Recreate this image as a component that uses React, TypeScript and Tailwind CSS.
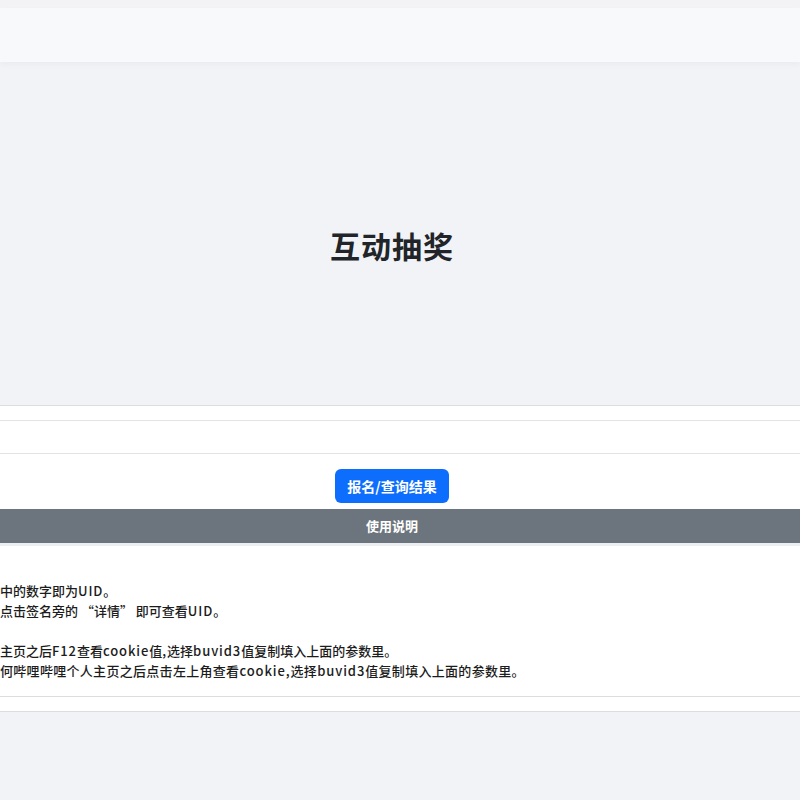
export default function App() {
  const font = { fontFamily: '"Noto Sans CJK SC", "Noto Sans", sans-serif' };
  const en = "tracking-[0.9px]";
  return (
    <div className="min-h-[800px] bg-[#f2f3f7] text-[#212529]" style={font}>
      <div className="h-2 bg-[#f3f3f5]" />
      <div className="h-[54px] bg-[#f8f9fb] shadow-[0_3px_6px_rgba(0,0,0,0.03)]" />

      <section className="h-[343px] flex items-center justify-center pr-4 pt-[24px]">
        <h1 className="text-[30px] font-bold tracking-[1px] text-[#212529]">互动抽奖</h1>
      </section>

      <div className="bg-white">
        <div className="h-[15px] border-t border-[#dcdde0]" />
        <div className="h-[33px] border-t border-[#e3e4e7]" />
        <div className="border-t border-[#e3e4e7] h-[56px] flex items-center justify-center pr-4 pt-[8px]">
          <button className="h-[34px] px-3 rounded-md bg-[#0d6efd] text-white text-[14px] font-bold leading-none">
            报名/查询结果
          </button>
        </div>
        <div className="h-[34px] bg-[#6c757d] flex items-center justify-center pr-4">
          <span className="text-white text-[13px] font-bold">使用说明</span>
        </div>
        <div className="h-[3px] bg-[#eceef1]" />
        <div className="pt-[35px] pb-[15px] text-[13px] leading-[20px] text-[#1c1c1c] font-medium">
          <p>
            中的数字即为<span className={en}>UID</span>。
          </p>
          <p>
            点击签名旁的 “详情” 即可查看<span className={en}>UID</span>。
          </p>
          <p className="mt-[20px]">
            主页之后<span className={en}>F12</span>查看<span className={en}>cookie</span>值
            <span className={en}>,</span>选择<span className={en}>buvid3</span>值复制填入上面的参数里。
          </p>
          <p className="tracking-[0.3px]">
            何哔哩哔哩个人主页之后点击左上角查看<span className={en}>cookie</span>
            <span className={en}>,</span>选择<span className={en}>buvid3</span>值复制填入上面的参数里。
          </p>
        </div>
        <div className="h-[15px] border-t border-[#dcdde0]" />
      </div>
      <div className="border-t border-[#dcdde0]" />
    </div>
  );
}
